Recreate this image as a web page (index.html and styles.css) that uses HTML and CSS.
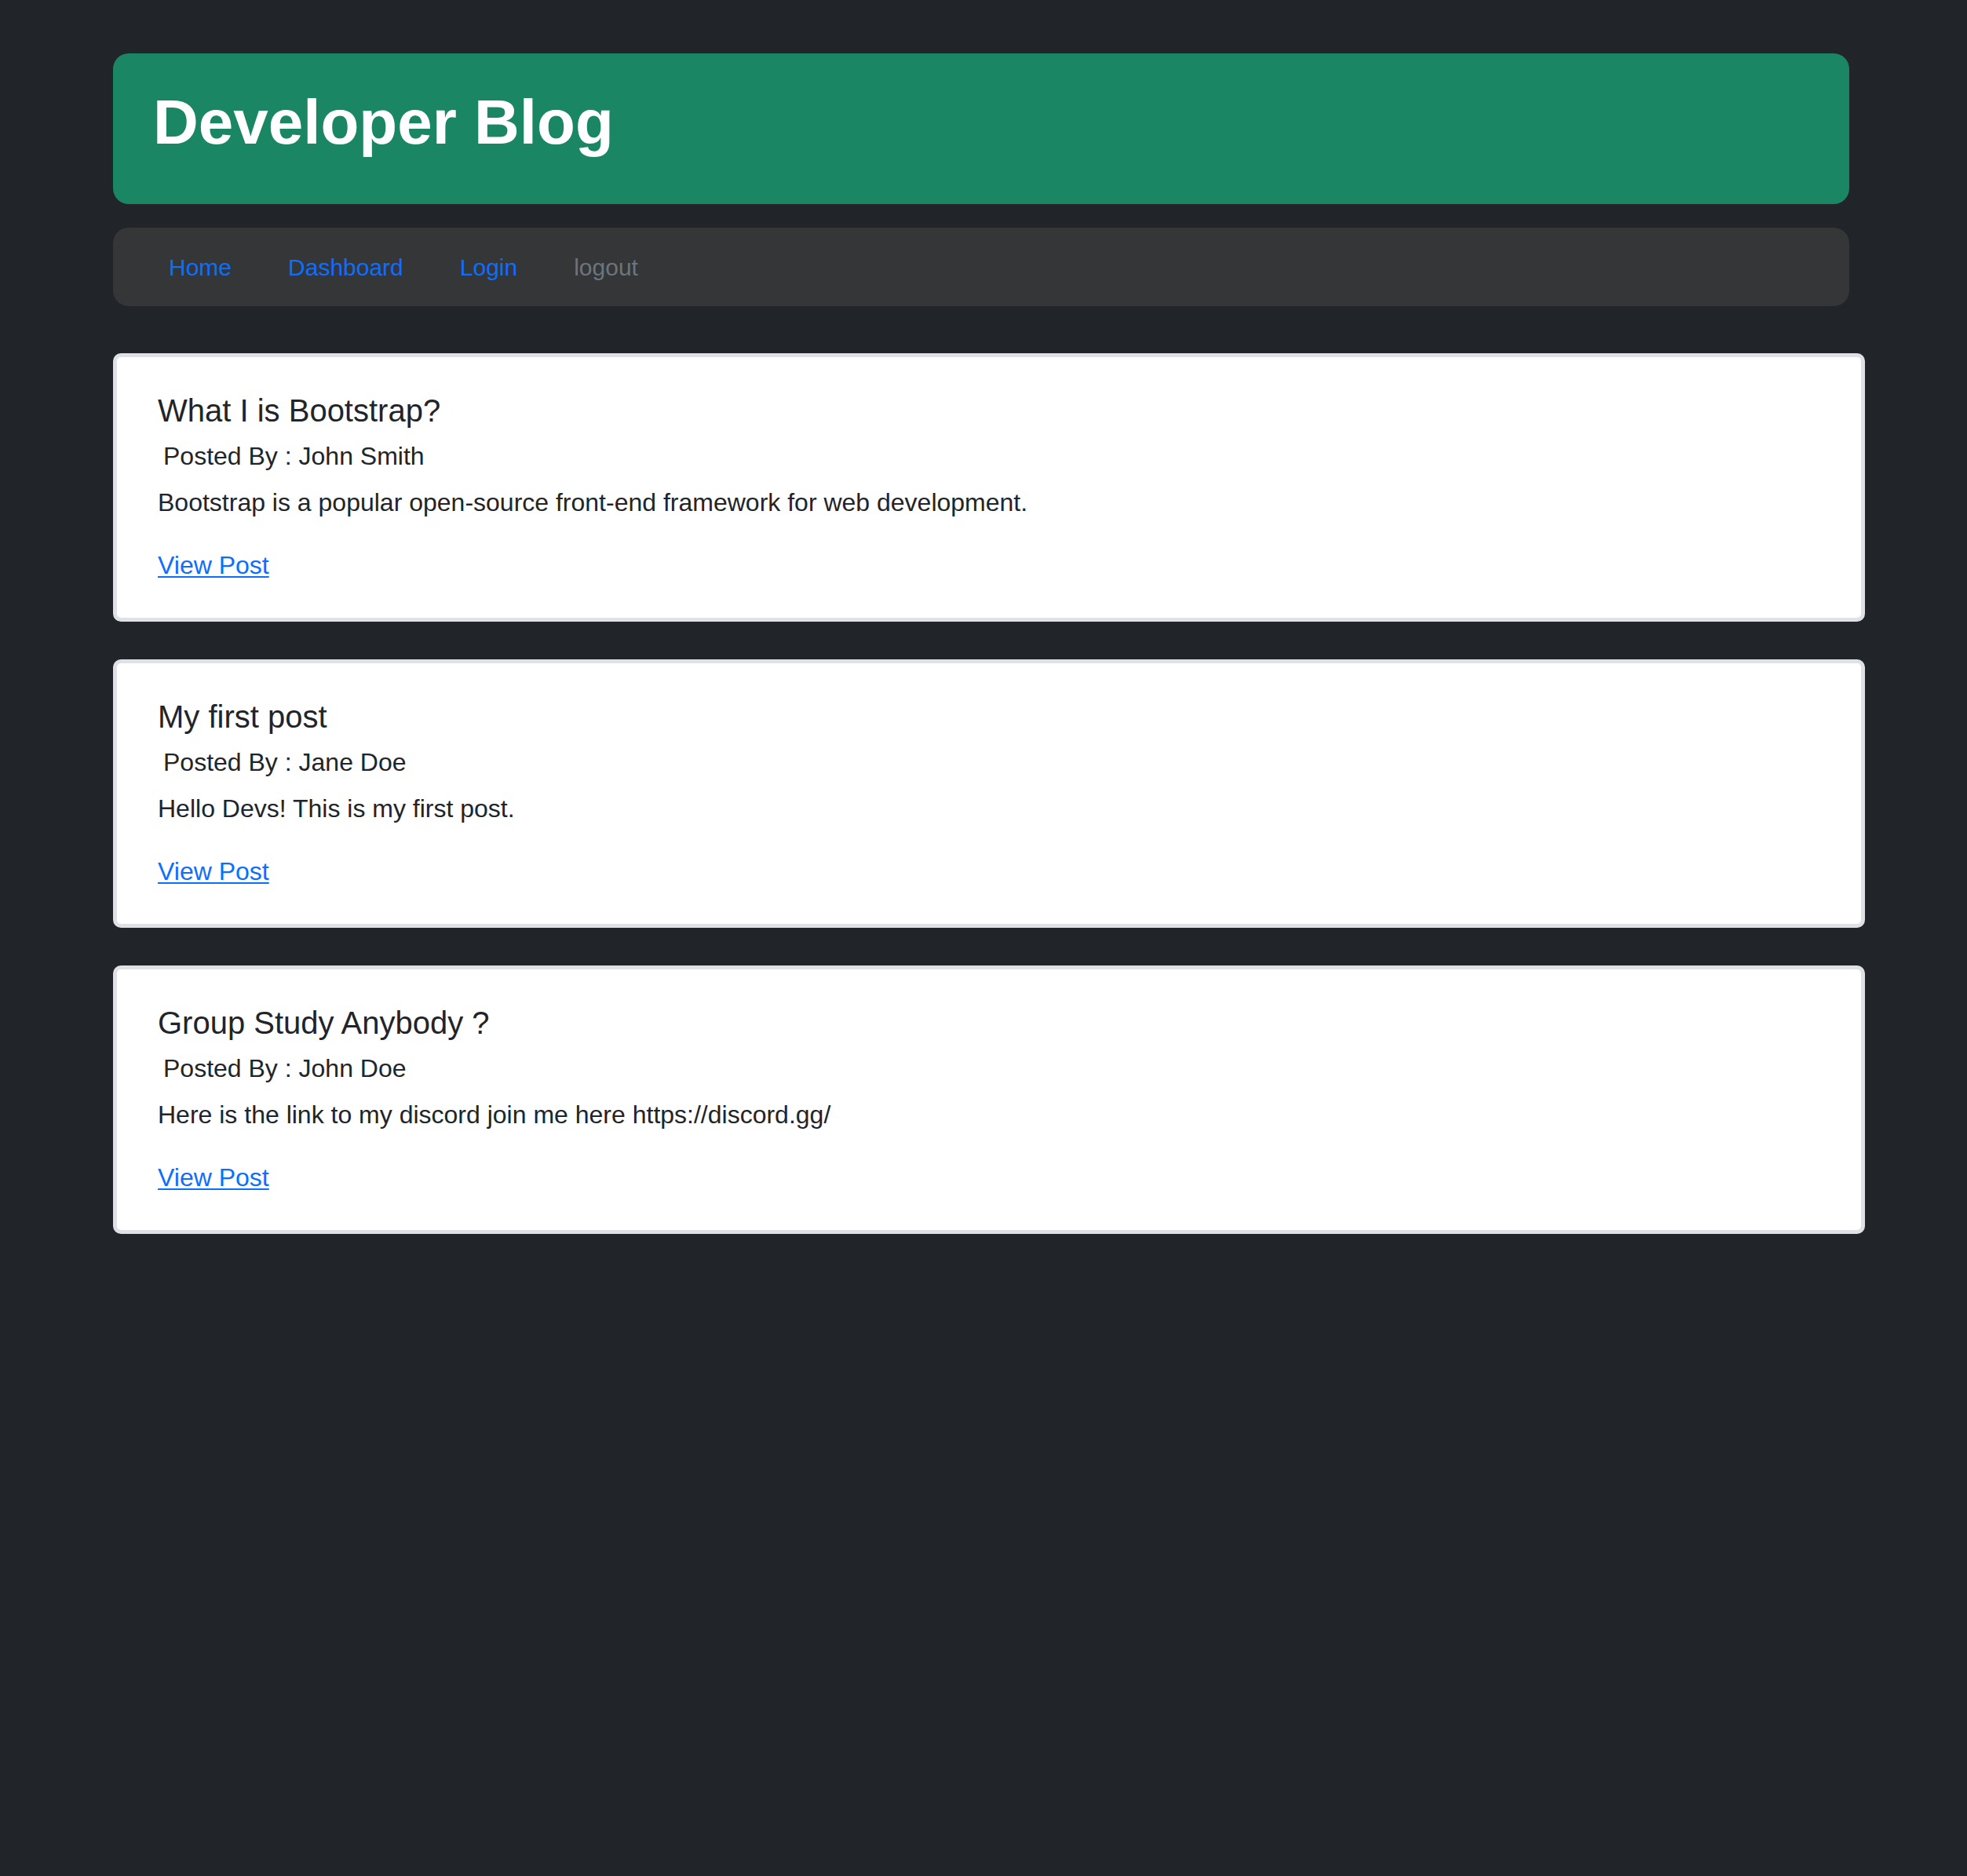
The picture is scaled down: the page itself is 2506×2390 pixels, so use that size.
FILE: index.html
```html
<!DOCTYPE html>
<html lang="en">
<head>
<meta charset="utf-8">
<title>Developer Blog</title>
<link rel="stylesheet" href="styles.css">
</head>
<body>
<div class="page">
  <header class="banner">
    <h1 class="banner-title">Developer Blog</h1>
  </header>
  <nav class="navbar">
    <a class="nav-link" href="#">Home</a>
    <a class="nav-link" href="#">Dashboard</a>
    <a class="nav-link" href="#">Login</a>
    <a class="nav-link nav-muted" href="#">logout</a>
  </nav>
  <main class="posts">
    <article class="card">
      <h5 class="card-title">What I is Bootstrap?</h5>
      <h6 class="card-author">Posted By : John Smith</h6>
      <p class="card-text">Bootstrap is a popular open-source front-end framework for web development.</p>
      <a class="view-link" href="#">View Post</a>
    </article>
    <article class="card">
      <h5 class="card-title">My first post</h5>
      <h6 class="card-author">Posted By : Jane Doe</h6>
      <p class="card-text">Hello Devs! This is my first post.</p>
      <a class="view-link" href="#">View Post</a>
    </article>
    <article class="card">
      <h5 class="card-title">Group Study Anybody ?</h5>
      <h6 class="card-author">Posted By : John Doe</h6>
      <p class="card-text">Here is the link to my discord join me here https://discord.gg/</p>
      <a class="view-link" href="#">View Post</a>
    </article>
  </main>
</div>
</body>
</html>
```
FILE: styles.css
```css
* {
  box-sizing: border-box;
}

html, body {
  margin: 0;
  padding: 0;
  background: #212428;
}

body {
  font-family: "Liberation Sans", Arial, Helvetica, sans-serif;
  font-size: 32px;
  line-height: 1.5;
  color: #212529;
  min-height: 2390px;
}

.page {
  padding: 68px 150px 0 144px;
}

.banner {
  background: #1a8664;
  border-radius: 20px;
  padding: 40px 51px;
}

.banner-title {
  margin: 0 0 16px 0;
  font-size: 80px;
  font-weight: 700;
  line-height: 1.2;
  color: #ffffff;
}

.navbar {
  margin-top: 30px;
  background: #353638;
  border-radius: 20px;
  padding: 0 35px;
  display: flex;
  align-items: center;
}

.nav-link {
  font-size: 30px;
  line-height: 1.5;
  padding: 27.5px 36px;
  color: #0d6efd;
  text-decoration: none;
}

.nav-muted {
  color: #6c757d;
}

.posts {
  margin-top: 60px;
  margin-right: -20px;
  display: flex;
  flex-direction: column;
  gap: 48px;
}

.card {
  background: #ffffff;
  border: 5px solid #dee2e6;
  border-radius: 10px;
  padding: 44px 52px 42.6px 52px;
  display: flex;
  flex-direction: column;
  align-items: flex-start;
}

.card-title {
  margin: 0;
  font-size: 40px;
  font-weight: 400;
  line-height: 1.2;
}

.card-author {
  margin: 15px 0 16px 0;
  padding-left: 7px;
  font-size: 32px;
  font-weight: 400;
  line-height: 1.2;
}

.card-text {
  margin: 0 0 32px 0;
}

.view-link {
  color: #0d6efd;
  text-decoration: underline;
  text-decoration-thickness: 2px;
  text-underline-offset: 3px;
}
```
